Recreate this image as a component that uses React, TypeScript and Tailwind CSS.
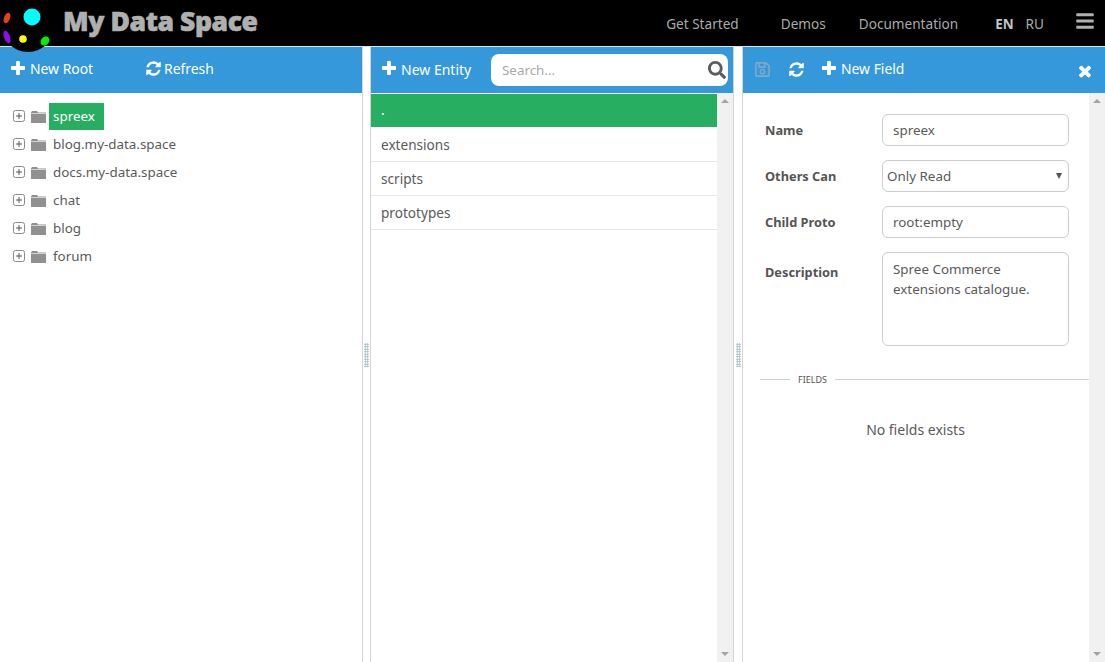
import React from 'react';
import { FaSearch, FaRegSave, FaBars } from 'react-icons/fa';

const roots = ['spreex', 'blog.my-data.space', 'docs.my-data.space', 'chat', 'blog', 'forum'];
const entities = ['extensions', 'scripts', 'prototypes'];

const PlusIcon = ({ className = '' }: { className?: string }) => (
    <svg width="14" height="14" viewBox="192 128 1408 1408" fill="currentColor" className={`shrink-0 ${className}`}>
        <path d="M1600 736v192q0 40-28 68t-68 28h-416v416q0 40-28 68t-68 28h-192q-40 0-68-28t-28-68v-416h-416q-40 0-68-28t-28-68v-192q0-40 28-68t68-28h416v-416q0-40 28-68t68-28h192q40 0 68 28t28 68v416h416q40 0 68 28t28 68z" />
    </svg>
);

const RefreshIcon = ({ className = '' }: { className?: string }) => (
    <svg width="17" height="17" viewBox="0 0 1792 1792" fill="currentColor" className={`shrink-0 ${className}`}>
        <path d="M1639 1056q0 5-1 7-64 268-268 434.5t-478 166.5q-146 0-282.5-55t-243.5-157l-129 129q-19 19-45 19t-45-19-19-45v-448q0-26 19-45t45-19h448q26 0 45 19t19 45-19 45l-137 137q71 66 161 102t187 36q134 0 250-65t186-179q11-17 53-117 8-23 30-23h192q13 0 22.5 9.5t9.5 22.5zm25-800v448q0 26-19 45t-45 19h-448q-26 0-45-19t-19-45 19-45l138-138q-148-137-349-137-134 0-250 65t-186 179q-11 17-53 117-8 23-30 23h-199q-13 0-22.5-9.5t-9.5-22.5v-7q65-268 270-434.5t480-166.5q146 0 284 55.5t245 156.5l130-129q19-19 45-19t45 19 19 45z" />
    </svg>
);

const CloseIcon = ({ className = '' }: { className?: string }) => (
    <svg width="18" height="18" viewBox="0 0 1792 1792" fill="currentColor" className={`shrink-0 ${className}`}>
        <path d="M1490 1322q0 40-28 68l-136 136q-28 28-68 28t-68-28l-294-294-294 294q-28 28-68 28t-68-28l-136-136q-28-28-28-68t28-68l294-294-294-294q-28-28-28-68t28-68l136-136q28-28 68-28t68 28l294 294 294-294q28-28 68-28t68 28l136 136q28 28 28 68t-28 68l-294 294 294 294q28 28 28 68z" />
    </svg>
);

const Logo = () => (
    <svg width="54" height="54" viewBox="0 0 54 54" className="absolute left-0 top-0 z-20">
        <circle cx="28" cy="25" r="27" fill="#000" />
        <circle cx="32" cy="17" r="8.5" fill="#00ffff" />
        <ellipse cx="7" cy="18" rx="3" ry="5.5" transform="rotate(22 7 18)" fill="#e8420f" />
        <ellipse cx="7" cy="37" rx="3" ry="6.5" transform="rotate(-20 7 37)" fill="#8a10e8" />
        <circle cx="23" cy="39" r="3.8" fill="#ffff00" />
        <ellipse cx="45" cy="41" rx="4" ry="5" transform="rotate(40 45 41)" fill="#00f000" />
    </svg>
);

const Folder = () => (
    <svg width="15" height="13" viewBox="0 0 15 13" className="shrink-0">
        <path d="M0 2.5 L1 1 H6 L7 2.5 H15 V13 H0 Z" fill="#909090" />
        <path d="M0 3.5 H15" stroke="#fff" strokeWidth="0.6" />
    </svg>
);

const Expander = () => (
    <svg width="12" height="12" viewBox="0 0 12 12" className="shrink-0">
        <rect x="0.5" y="0.5" width="11" height="11" rx="2" fill="#fff" stroke="#8a8a8a" />
        <path d="M3 6 H9 M6 3 V9" stroke="#555" strokeWidth="1" />
    </svg>
);

const Splitter = ({ className = '' }: { className?: string }) => (
    <div className={`flex shrink-0 items-center justify-center ${className}`}>
        <div className="h-[24px] w-[5px] bg-[radial-gradient(#9db4ba_0.8px,transparent_1px)] bg-[length:2.5px_2.5px]" />
    </div>
);

const Scrollbar = () => (
    <div className="flex w-[16px] shrink-0 flex-col items-center justify-between bg-[#f1f1f1] py-[6px]">
        <div className="h-0 w-0 border-x-[4px] border-b-[4px] border-x-transparent border-b-[#a3a3a3]" />
        <div className="h-0 w-0 border-x-[4px] border-t-[4px] border-x-transparent border-t-[#a3a3a3]" />
    </div>
);

const Field = ({ label, top = 'pt-[7px]', children }: { label: string; top?: string; children: React.ReactNode }) => (
    <div className="flex items-start">
        <label className={`w-[117px] shrink-0 text-[12.8px] font-bold text-[#555] ${top}`}>{label}</label>
        {children}
    </div>
);

export default function App() {
    return (
        <div className="relative flex h-[662px] w-[1105px] flex-col overflow-hidden bg-white font-['Noto_Sans',sans-serif] text-[13.4px] text-[#5a5a5a]">
            <Logo />
            {/* Header */}
            <header className="flex h-[46px] shrink-0 items-center bg-black text-[#a9a9a9]">
                <span className="mb-[2px] ml-[63px] text-[26.5px] font-black tracking-[-0.4px] text-[#b0b0b0] [-webkit-text-stroke:0.6px_#b0b0b0]">My Data Space</span>
                <nav className="ml-auto mt-[2px] flex items-center text-[13.6px]">
                    <a className="mr-[42px]">Get Started</a>
                    <a className="mr-[33px]">Demos</a>
                    <a className="mr-[37px]">Documentation</a>
                    <b className="mr-[12px] text-[13.4px] text-[#c4c4c4]">EN</b>
                    <a className="mr-[31px]">RU</a>
                    <FaBars size={20} className="mr-[10px] -translate-y-[3px] text-[#b0b0b0]" />
                </nav>
            </header>
            <div className="h-px shrink-0 bg-[#d5e7f3]" />

            <main className="flex min-h-0 flex-1">
                {/* Roots */}
                <section className="flex w-[363px] shrink-0 flex-col border-r border-[#d4d4d4]">
                    <div className="flex h-[46px] shrink-0 items-center bg-[#3498db] pl-[11px] text-[13.9px] text-white">
                        <PlusIcon className="mb-[5px] mr-[5px]" />
                        <span className="mb-[1px] w-[115px]">New Root</span>
                        <RefreshIcon className="mb-[4px] mr-[2px]" />
                        <span className="mb-[1px]">Refresh</span>
                    </div>
                    <ul className="pt-[9px] pl-[13px]">
                        {roots.map((r, i) => (
                            <li key={r} className="flex h-[28px] items-center">
                                <Expander />
                                <span className="ml-[6px]"><Folder /></span>
                                <span className={`ml-[3px] flex h-[27px] items-center pl-[4px] pr-[9px] ${i === 0 ? 'bg-[#27ae60] text-white' : ''}`}>{r}</span>
                            </li>
                        ))}
                    </ul>
                </section>

                <Splitter className="w-[7px]" />

                {/* Entities */}
                <section className="flex w-[364px] shrink-0 flex-col border-x border-[#d4d4d4]">
                    <div className="flex h-[46px] shrink-0 items-center bg-[#3498db] pl-[11px] text-white">
                        <PlusIcon className="mb-[5px] mr-[5px]" />
                        <span className="mb-[1px] w-[71px] whitespace-nowrap text-[14px]">New Entity</span>
                        <div className="ml-[19px] flex h-[32px] w-[237px] items-center justify-between rounded-[8px] bg-white pl-[11px] pr-[2px]">
                            <span className="text-[#a9a9a9]">Search...</span>
                            <FaSearch size={18} className="text-[#5c5c5c]" />
                        </div>
                    </div>
                    <div className="flex min-h-0 flex-1">
                        <ul className="flex-1 text-[13.6px]">
                            <li className="mt-px flex h-[33px] items-center bg-[#27ae60] px-[10px] text-white">.</li>
                            {entities.map((e, i) => (
                                <li key={e} className={`flex h-[34px] items-center border-b border-[#e6e6e6] px-[10px] pt-[2px] ${i === 0 ? 'mt-px' : ''}`}>{e}</li>
                            ))}
                        </ul>
                        <Scrollbar />
                    </div>
                </section>

                <Splitter className="w-[8px]" />

                {/* Details */}
                <section className="flex min-w-0 flex-1 flex-col border-l border-[#d4d4d4]">
                    <div className="flex h-[46px] shrink-0 items-center bg-[#3498db] pl-[11px] pr-[11px] text-white">
                        <FaRegSave size={17} className="mb-[2px] text-[#7fa9c6]" />
                        <RefreshIcon className="mb-[2px] ml-[17px]" />
                        <PlusIcon className="mb-[5px] ml-[17px] mr-[5px]" />
                        <span className="mb-[1px] text-[13.9px]">New Field</span>
                        <CloseIcon className="ml-auto mt-[2px]" />
                    </div>
                    <div className="flex min-h-0 flex-1">
                        <div className="min-w-0 flex-1 pt-[21px]">
                            <div className="flex flex-col gap-[14px] pl-[22px]">
                                <Field label="Name">
                                    <div className="flex h-[32px] w-[187px] items-center rounded-[6px] border border-[#cccccc] px-[10px]">spreex</div>
                                </Field>
                                <Field label="Others Can">
                                    <div className="flex h-[32px] w-[187px] items-center justify-between rounded-[6px] border border-[#cccccc] pl-[4px] pr-[6px]">
                                        <span>Only Read</span>
                                        <span className="h-0 w-0 border-x-[3px] border-t-[6px] border-x-transparent border-t-[#555]" />
                                    </div>
                                </Field>
                                <Field label="Child Proto">
                                    <div className="flex h-[32px] w-[187px] items-center rounded-[6px] border border-[#cccccc] px-[10px]">root:empty</div>
                                </Field>
                                <Field label="Description" top="pt-[11px]">
                                    <div className="h-[94px] w-[187px] rounded-[6px] border border-[#cccccc] px-[10px] py-[6px] leading-[20px]">
                                        Spree Commerce extensions catalogue.
                                    </div>
                                </Field>
                            </div>
                            <div className="mt-[27px] flex items-center pl-[17px]">
                                <div className="h-px w-[30px] bg-[#cfcfcf]" />
                                <span className="px-[8px] text-[9px] text-[#555]">FIELDS</span>
                                <div className="h-px flex-1 bg-[#cfcfcf]" />
                            </div>
                            <p className="mt-[32px] pr-[1px] text-center text-[14px]">No fields exists</p>
                        </div>
                        <Scrollbar />
                    </div>
                </section>
            </main>
        </div>
    );
}
